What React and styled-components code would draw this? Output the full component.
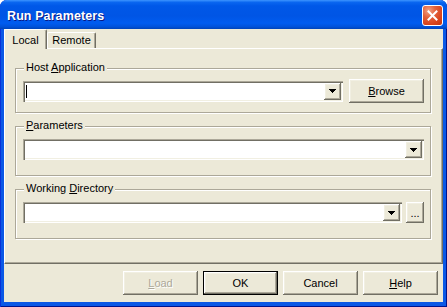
import React from 'react';
import styled, { createGlobalStyle } from 'styled-components';

const GlobalStyle = createGlobalStyle`
  html, body { margin: 0; padding: 0; background: #ffffff; }
  body { font-family: "Liberation Sans", Tahoma, Arial, sans-serif; font-size: 11px; }
`;

const raised = `
  box-shadow: inset -1px -1px 0 #716F64, inset 1px 1px 0 #FFFFFF,
    inset -2px -2px 0 #ACA899, inset 2px 2px 0 #F1EFE2;
`;

const Window = styled.div`
  width: 447px;
  height: 307px;
  box-sizing: border-box;
  display: flex;
  flex-direction: column;
  background: #0A58E6;
  border-radius: 7px 7px 0 0;
  overflow: hidden;
  padding-bottom: 5px;
  box-shadow: inset 1px 0 0 #0831D9, inset -1px 0 0 #00138C, inset 0 -1px 0 #00138C;
`;

const TitleBar = styled.div`
  height: 29px;
  flex: none;
  box-sizing: border-box;
  display: flex;
  align-items: center;
  justify-content: space-between;
  padding: 2px 4px 0 7px;
  background: linear-gradient(180deg, #3D95FF 0%, #0A66F0 8%, #0058E8 20%, #0055E5 55%, #005CF0 80%, #0052DA 92%, #0043B8 100%);
`;

const Title = styled.span`
  color: #ffffff;
  font-family: "Liberation Sans", Tahoma, sans-serif;
  font-weight: bold;
  font-size: 12.5px;
  letter-spacing: 0.1px;
  text-shadow: 1px 1px 0 #0A1883;
`;

const CloseButton = styled.div`
  width: 21px;
  height: 21px;
  box-sizing: border-box;
  border: 1px solid #ffffff;
  border-radius: 3px;
  background: radial-gradient(circle at 30% 25%, #F2A387 0%, #E3623C 35%, #D8431C 70%, #C1360F 100%);
  display: flex;
  align-items: center;
  justify-content: center;
`;

const Client = styled.div`
  flex: 1;
  margin: 0 4px;
  background: #ECE9D8;
  display: flex;
  flex-direction: column;
`;

const TabStrip = styled.div`
  height: 19px;
  flex: none;
  display: flex;
  align-items: flex-end;
  position: relative;
  z-index: 1;
`;

const Tab = styled.div`
  box-sizing: border-box;
  width: ${p => p.$w}px;
  height: ${p => (p.$active ? 20 : 16)}px;
  margin-bottom: ${p => (p.$active ? -1 : 0)}px;
  padding-top: ${p => (p.$active ? 4 : 1)}px;
  background: #ECE9D8;
  border-top: 1px solid #ffffff;
  border-left: 1px solid #ffffff;
  border-right: 1px solid #716F64;
  border-radius: 2px 2px 0 0;
  box-shadow: inset -1px 0 0 #ACA899;
  text-align: center;
  color: #000;
  font-size: 11px;
  line-height: 13px;
`;

const TabPanel = styled.div`
  height: 216px;
  flex: none;
  box-sizing: border-box;
  border-top: 1px solid #ffffff;
  border-left: 1px solid #ffffff;
  border-right: 1px solid #716F64;
  border-bottom: 1px solid #716F64;
  box-shadow: inset -1px -1px 0 #ACA899;
  padding: 19px 11px 0 10px;
  display: flex;
  flex-direction: column;
  gap: 13px;
`;

const GroupBox = styled.div`
  position: relative;
  border: 1px solid #ACA899;
  box-shadow: inset 1px 1px 0 #ffffff, 1px 1px 0 #ffffff;
  padding: ${p => p.$pt}px 6px ${p => p.$pb}px 7px;
`;

const Legend = styled.span`
  position: absolute;
  top: -8px;
  left: 8px;
  padding: 0 2px;
  background: #ECE9D8;
  font-size: 11px;
  line-height: 13px;
  color: #000;
`;

const Row = styled.div`
  display: flex;
  align-items: center;
  gap: ${p => p.$gap || 0}px;
`;

const Combo = styled.div`
  flex: 1;
  height: 21px;
  box-sizing: border-box;
  background: #ffffff;
  padding: 2px;
  display: flex;
  align-items: center;
  box-shadow: inset 1px 1px 0 #ACA899, inset 2px 2px 0 #716F64,
    inset -1px -1px 0 #ffffff, inset -2px -2px 0 #F1EFE2;
`;

const Caret = styled.span`
  width: 1px;
  height: 13px;
  margin-left: 1px;
  background: #000;
`;

const DropButton = styled.div`
  margin-left: auto;
  width: 17px;
  height: 17px;
  background: #ECE9D8;
  display: flex;
  align-items: center;
  justify-content: center;
  ${raised}
`;

const Button = styled.div`
  width: ${p => p.$w || 75}px;
  height: ${p => p.$h || 24}px;
  box-sizing: border-box;
  flex: none;
  background: #ECE9D8;
  display: flex;
  align-items: center;
  justify-content: center;
  font-size: 11px;
  color: ${p => (p.$disabled ? '#ACA899' : '#000')};
  text-shadow: ${p => (p.$disabled ? '1px 1px 0 #ffffff' : 'none')};
  border: ${p => (p.$default ? '1px solid #000' : 'none')};
  ${raised}
`;

const U = styled.span`
  text-decoration: underline;
  text-underline-offset: 1px;
`;

const Footer = styled.div`
  flex: 1;
  display: flex;
  align-items: center;
  justify-content: flex-end;
  gap: 5px;
  padding-right: 5px;
`;

const Arrow = () => (
  <svg width="7" height="4" viewBox="0 0 7 4" shapeRendering="crispEdges">
    <rect x="0" y="0" width="7" height="1" fill="#000" />
    <rect x="1" y="1" width="5" height="1" fill="#000" />
    <rect x="2" y="2" width="3" height="1" fill="#000" />
    <rect x="3" y="3" width="1" height="1" fill="#000" />
  </svg>
);

const CloseIcon = () => (
  <svg width="11" height="11" viewBox="0 0 11 11">
    <path d="M1.5 1.5 L9.5 9.5 M9.5 1.5 L1.5 9.5" stroke="#fff" strokeWidth="2" strokeLinecap="square" />
  </svg>
);

export default function App() {
  return (
    <>
      <GlobalStyle />
      <Window>
        <TitleBar>
          <Title>Run Parameters</Title>
          <CloseButton><CloseIcon /></CloseButton>
        </TitleBar>
        <Client>
          <TabStrip>
            <Tab $active $w={43}>Local</Tab>
            <Tab $w={49}>Remote</Tab>
          </TabStrip>
          <TabPanel>
            <GroupBox $pt={10} $pb={9}>
              <Legend>Host <U>A</U>pplication</Legend>
              <Row $gap={6}>
                <Combo>
                  <Caret />
                  <DropButton><Arrow /></DropButton>
                </Combo>
                <Button><U>B</U>rowse</Button>
              </Row>
            </GroupBox>
            <GroupBox $pt={12} $pb={15}>
              <Legend><U>P</U>arameters</Legend>
              <Row>
                <Combo>
                  <DropButton><Arrow /></DropButton>
                </Combo>
              </Row>
            </GroupBox>
            <GroupBox $pt={12} $pb={15}>
              <Legend>Working <U>D</U>irectory</Legend>
              <Row $gap={4}>
                <Combo>
                  <DropButton><Arrow /></DropButton>
                </Combo>
                <Button $w={18} $h={21}>...</Button>
              </Row>
            </GroupBox>
          </TabPanel>
          <Footer>
            <Button $disabled><U>L</U>oad</Button>
            <Button $default>OK</Button>
            <Button>Cancel</Button>
            <Button><U>H</U>elp</Button>
          </Footer>
        </Client>
      </Window>
    </>
  );
}
